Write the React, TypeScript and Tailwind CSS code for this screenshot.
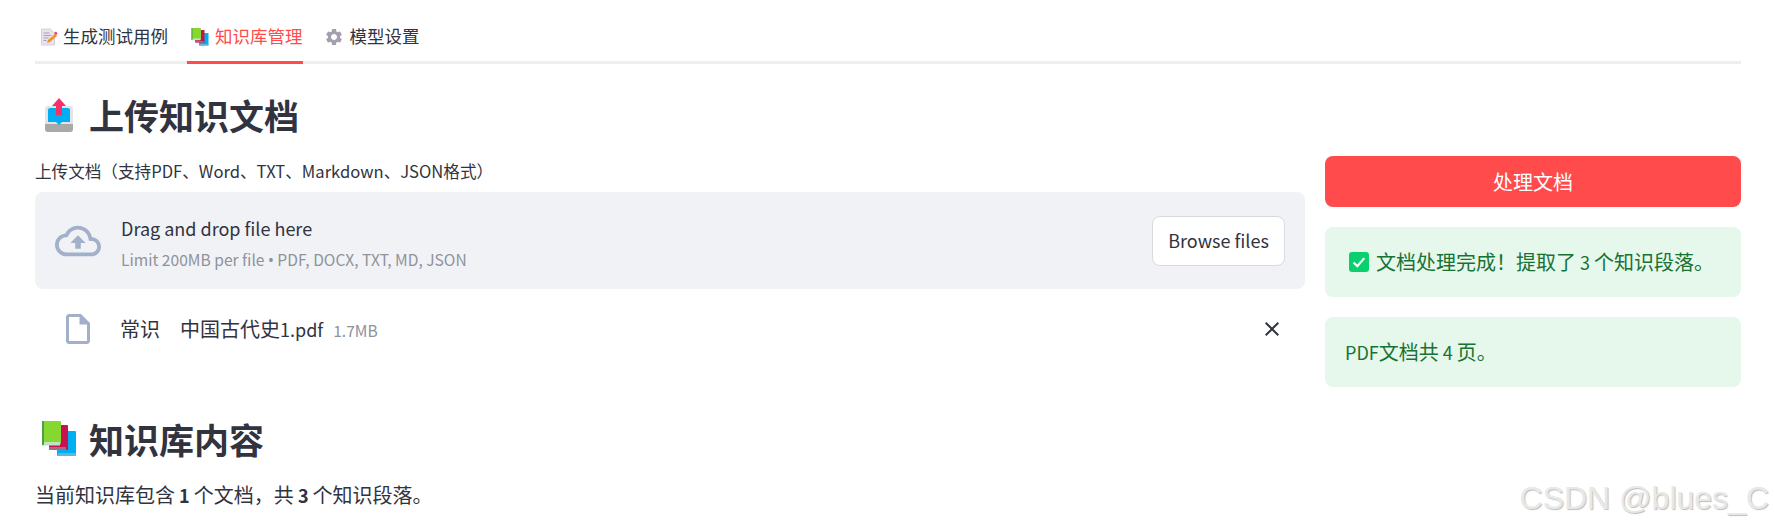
import React from "react";

const CJK = "font-['Noto_Sans_CJK_SC','Noto_Sans',sans-serif]";

const MemoIcon = () => (
  <svg width="18" height="18" viewBox="0 0 18 18" className="shrink-0">
    <path d="M1.5 1h9l4 4v12h-13z" fill="#e9e3ee" stroke="#cfc6d6" strokeWidth="0.8" />
    <path d="M3.5 5h6M3.5 7.5h8M3.5 10h5M3.5 12.5h3" stroke="#a89fb4" strokeWidth="1" />
    <path d="M7 15l1-3 7-6 2 2-7 6z" fill="#f6902c" />
    <path d="M14 5l2-1.5 1.6 2-1.6 1.7z" fill="#f5386e" />
  </svg>
);

const BooksIcon = ({ size }: { size: number }) => (
  <svg width={size} height={size} viewBox="0 0 36 36" className="shrink-0">
    <rect x="16" y="10" width="19" height="25" rx="1" fill="#01aef2" />
    <rect x="17" y="32" width="18" height="3" fill="#5cb6e0" />
    <rect x="8" y="4" width="19" height="25" rx="1" fill="#c8124f" />
    <rect x="8" y="26" width="17" height="3" fill="#a8687f" />
    <rect x="1" y="0" width="19" height="23" rx="1" fill="#86d72f" />
    <rect x="1" y="21" width="18" height="3.5" fill="#bfe3c4" />
    <rect x="1" y="0" width="2" height="24" fill="#4f9e45" />
  </svg>
);

const GearIcon = () => (
  <svg width="20" height="20" viewBox="0 0 24 24" fill="#a49fb0" className="shrink-0">
    <path d="M19.14 12.94c.04-.3.06-.61.06-.94 0-.32-.02-.64-.07-.94l2.03-1.58c.18-.14.23-.41.12-.61l-1.92-3.32c-.12-.22-.37-.29-.59-.22l-2.39.96c-.5-.38-1.03-.7-1.62-.94l-.36-2.54c-.04-.24-.24-.41-.48-.41h-3.84c-.24 0-.43.17-.47.41l-.36 2.54c-.59.24-1.13.57-1.62.94l-2.39-.96c-.22-.08-.47 0-.59.22L2.74 8.87c-.12.21-.08.47.12.61l2.03 1.58c-.05.3-.09.63-.09.94s.02.64.07.94l-2.03 1.58c-.18.14-.23.41-.12.61l1.92 3.32c.12.22.37.29.59.22l2.39-.96c.5.38 1.03.7 1.62.94l.36 2.54c.05.24.24.41.48.41h3.84c.24 0 .44-.17.47-.41l.36-2.54c.59-.24 1.13-.56 1.62-.94l2.39.96c.22.08.47 0 .59-.22l1.92-3.32c.12-.22.07-.47-.12-.61l-2.01-1.58zM12 15.6c-1.98 0-3.6-1.62-3.6-3.6s1.62-3.6 3.6-3.6 3.6 1.62 3.6 3.6-1.62 3.6-3.6 3.6z" />
  </svg>
);

const OutboxIcon = () => (
  <svg width="36" height="36" viewBox="0 0 36 36" className="shrink-0">
    <rect x="4" y="9" width="28" height="26" rx="3" fill="#e4e4e6" />
    <path d="M4 27h28v5a3 3 0 0 1-3 3H7a3 3 0 0 1-3-3z" fill="#a9a9a9" />
    <path d="M7 13a2 2 0 0 1 2-2h18a2 2 0 0 1 2 2v12h-8l-3 3-3-3H7z" fill="#01aef2" />
    <path d="M18 1l7 8h-4v9h-6V9h-4z" fill="#f5316a" />
  </svg>
);

const CloudIcon = () => (
  <svg width="46" height="46" viewBox="0 0 24 24" fill="#a3b0ca" className="shrink-0">
    <path d="M19.35 10.04C18.67 6.59 15.64 4 12 4 9.11 4 6.6 5.64 5.35 8.04 2.34 8.36 0 10.91 0 14c0 3.31 2.69 6 6 6h13c2.76 0 5-2.24 5-5 0-2.64-2.05-4.78-4.65-4.96zM19 18H6c-2.21 0-4-1.79-4-4 0-2.05 1.53-3.76 3.56-3.97l1.07-.11.5-.95C8.08 7.14 9.94 6 12 6c2.62 0 4.88 1.86 5.39 4.43l.3 1.5 1.53.11c1.56.1 2.78 1.41 2.78 2.96 0 1.65-1.35 3-3 3zM8 13h2.55v3h2.9v-3H16l-4-4z" />
  </svg>
);

const FileIcon = () => (
  <svg width="36" height="36" viewBox="0 0 24 24" fill="#a3b0ca" className="shrink-0">
    <path d="M14 2H6c-1.1 0-1.99.9-1.99 2L4 20c0 1.1.89 2 1.99 2H18c1.1 0 2-.9 2-2V8l-6-6zM6 20V4h7v5h5v11H6z" />
  </svg>
);

const CloseIcon = () => (
  <svg width="24" height="24" viewBox="0 0 24 24" fill="#31333f" className="shrink-0">
    <path d="M19 6.41L17.59 5 12 10.59 6.41 5 5 6.41 10.59 12 5 17.59 6.41 19 12 13.41 17.59 19 19 17.59 13.41 12z" />
  </svg>
);

const CheckIcon = () => (
  <svg width="20" height="20" viewBox="0 0 20 20" className="shrink-0">
    <rect x="0" y="0" width="20" height="20" rx="3" fill="#08d06f" />
    <path d="M4.5 10.5l3.8 3.6 7-8" fill="none" stroke="#fff" strokeWidth="2.2" />
  </svg>
);

const App = () => {
  return (
    <div className={`relative h-[527px] w-full overflow-hidden bg-white pr-[33px] pl-[35px] text-[#31333f] ${CJK}`}>
      <div className="flex h-[64px] gap-[19px] border-b-[3px] border-[#eeeeef] pt-[22px]">
        <div className="flex h-[42px] items-start gap-[5px] pl-[5px] text-[17.5px] leading-[28px]">
          <span className="mt-[6px]"><MemoIcon /></span>
          生成测试用例
        </div>
        <div className="flex h-[42px] items-start gap-[6px] border-b-[3px] border-[#ff4b4b] pl-[4px] text-[17.5px] leading-[28px] text-[#ff4b4b]">
          <span className="mt-[6px]"><BooksIcon size={18} /></span>
          知识库管理
        </div>
        <div className="flex h-[42px] items-start gap-[6px] pl-[2px] text-[17.5px] leading-[28px]">
          <span className="mt-[5px]"><GearIcon /></span>
          模型设置
        </div>
      </div>

      <div className="mt-[25px] flex h-[52px] items-center gap-[12px] pl-[6px] text-[35px] leading-[52px] font-bold">
        <OutboxIcon />
        上传知识文档
      </div>

      <div className="mt-[15px] flex gap-[20px]">
        <div className="w-[1270px]">
          <div className="mt-[2px] h-[26px] text-[16.6px] leading-[26px]">
            上传文档（支持PDF、Word、TXT、Markdown、JSON格式）
          </div>
          <div className="mt-[8px] flex h-[97px] items-center rounded-lg bg-[#f0f2f6] pr-[20px] pl-[20px]">
            <CloudIcon />
            <div className="ml-[20px] flex-1 pt-[4px]">
              <div className="text-[18px] leading-[26px]">Drag and drop file here</div>
              <div className="mt-[7px] text-[15.6px] leading-[22px] text-[#8f939b]">
                Limit 200MB per file <span className="font-['Noto_Sans',sans-serif]">•</span> PDF, DOCX, TXT, MD, JSON
              </div>
            </div>
            <button className="flex h-[50px] w-[133px] items-center justify-center rounded-lg border border-[#d9dae0] bg-white text-[18px]">
              Browse files
            </button>
          </div>
          <div className="mt-[22px] flex h-[36px] items-center pr-[21px] pl-[25px]">
            <FileIcon />
            <div className="ml-[24px] flex flex-1 items-baseline gap-[10px]">
              <span className="text-[20px]">常识　中国古代史<span className="text-[18px]">1.pdf</span></span>
              <span className="text-[15.6px] text-[#8f939b]">1.7MB</span>
            </div>
            <CloseIcon />
          </div>
        </div>

        <div className="w-[416px]">
          <button className="flex h-[51px] w-full items-center justify-center rounded-lg bg-[#ff4b4b] text-[20px] text-white">
            处理文档
          </button>
          <div className="mt-[20px] flex h-[70px] items-center gap-[7px] rounded-lg bg-[#e6f7ec] pl-[24px] text-[20px] text-[#177233]">
            <CheckIcon />
            <span>文档处理完成！提取了<span className="text-[18px]"> 3 </span>个知识段落。</span>
          </div>
          <div className="mt-[20px] flex h-[70px] items-center rounded-lg bg-[#e6f7ec] pl-[20px] text-[20px] text-[#177233]">
            <span><span className="text-[18px]">PDF</span>文档共<span className="text-[18px]"> 4 </span>页。</span>
          </div>
        </div>
      </div>

      <div className="absolute top-[413px] left-[35px] flex h-[52px] items-center gap-[12px] pl-[6px] text-[35px] leading-[52px] font-bold">
        <BooksIcon size={36} />
        知识库内容
      </div>
      <div className="absolute top-[482px] left-[35px] text-[20px] leading-[26px]">
        当前知识库包含<span className="text-[18px] font-semibold"> 1 </span>个文档，共<span className="text-[18px] font-semibold"> 3 </span>个知识段落。
      </div>

      <div className="absolute top-[478px] right-[5px] font-['Liberation_Sans',sans-serif] text-[32px] leading-[40px] text-[#e8e8e8] [text-shadow:1px_1px_1px_#bdbdbd]">
        CSDN @blues_C
      </div>
    </div>
  );
};

export default App;
